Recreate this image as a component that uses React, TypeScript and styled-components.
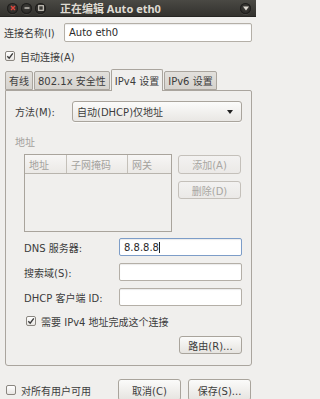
import React from 'react'
import styled, { createGlobalStyle } from 'styled-components'

const GlobalStyle = createGlobalStyle`
  html, body {
    margin: 0;
    padding: 0;
    background: #f0efed;
  }
  body {
    font-family: "DejaVu Sans", "Noto Sans CJK SC", sans-serif;
    font-size: 10px;
    color: #3c3c3c;
  }
`

const Window = styled.div`
  width: 256px;
  height: 399px;
  overflow: hidden;
  background: #f0efed;
  display: flex;
  flex-direction: column;
`

// title bar
const TitleBar = styled.div`
  height: 17px;
  flex: none;
  display: flex;
  align-items: center;
  padding: 0 5px 0 7px;
  background: linear-gradient(#4a4944, #33322e);
  border-bottom: 1px solid #262522;
  box-sizing: border-box;
`

const WinButtons = styled.div`
  display: flex;
  gap: 3px;
`

const WinButton = styled.div`
  width: 11px;
  height: 11px;
  border-radius: 50%;
  background: radial-gradient(circle at 50% 40%, #3e3d39, #252422);
  box-shadow: inset 0 0 0 1px #1f1e1c, 0 1px 0 rgba(255, 255, 255, 0.08);
  display: flex;
  align-items: center;
  justify-content: center;
`

const Title = styled.div`
  flex: 1;
  margin-left: 14px;
  font-family: "Noto Sans", "Noto Sans CJK SC", sans-serif;
  font-weight: 700;
  font-size: 11px;
  color: #dfdbd2;
  white-space: nowrap;
`

const Body = styled.div`
  flex: 1;
  display: flex;
  flex-direction: column;
  padding: 0 4px 0 5px;
`

const NameRow = styled.div`
  margin-top: 6px;
  height: 19px;
  display: flex;
  align-items: center;
`

const NameLabel = styled.span`
  width: 60px;
  margin-left: -1px;
`

const TextInput = styled.div<{ $focused?: boolean; $width?: number }>`
  box-sizing: border-box;
  height: 100%;
  ${(p) => (p.$width ? `width: ${p.$width}px;` : 'flex: 1;')}
  background: #fff;
  border: 1px solid ${(p) => (p.$focused ? '#7d9dc8' : '#b4afa7')};
  border-radius: 2px;
  box-shadow: inset 0 1px 1px rgba(0, 0, 0, 0.08);
  padding-left: 4px;
  display: flex;
  align-items: center;
  font-size: 10px;
  color: #2a2a2a;
`

const Caret = styled.span`
  display: inline-block;
  width: 1px;
  height: 11px;
  background: #222;
`

const CheckRow = styled.label<{ $indent?: number }>`
  display: flex;
  align-items: center;
  height: 12px;
  gap: 5px;
  padding-left: ${(p) => p.$indent ?? 0}px;
`

const Box = styled.span`
  box-sizing: border-box;
  width: 10px;
  height: 10px;
  border: 1px solid #8a8680;
  border-radius: 2px;
  background: linear-gradient(#ffffff, #e8e6e3);
  display: flex;
  align-items: center;
  justify-content: center;
`

const Check = ({ checked }: { checked?: boolean }) => (
  <Box>
    {checked && (
      <svg width="8" height="8" viewBox="0 0 8 8">
        <path d="M1.3 4.2 L3.2 6.2 L6.8 1.4" fill="none" stroke="#3a3a3a" strokeWidth="1.4" />
      </svg>
    )}
  </Box>
)

// tabs
const TabBar = styled.div`
  margin-top: 8px;
  height: 20px;
  display: flex;
  align-items: flex-end;
  position: relative;
  z-index: 1;
`

const Tab = styled.div<{ $active?: boolean }>`
  box-sizing: border-box;
  height: ${(p) => (p.$active ? 22 : 19)}px;
  margin-bottom: ${(p) => (p.$active ? -1 : 0)}px;
  margin-right: 1px;
  padding: 0 3px;
  display: flex;
  align-items: center;
  border: 1px solid #aaa59e;
  border-bottom: ${(p) => (p.$active ? 'none' : '1px solid #aaa59e')};
  border-radius: 2px 2px 0 0;
  background: ${(p) => (p.$active ? '#f0efed' : 'linear-gradient(#e2e0dc, #d6d3ce)')};
  white-space: nowrap;
`

const Panel = styled.div`
  box-sizing: border-box;
  height: 276px;
  border: 1px solid #aaa59e;
  border-radius: 0 2px 3px 3px;
  padding: 10px 9px 0 9px;
  display: flex;
  flex-direction: column;
`

const MethodRow = styled.div`
  height: 21px;
  display: flex;
  align-items: center;
`

const MethodLabel = styled.span`
  width: 57px;
`

const Combo = styled.div`
  box-sizing: border-box;
  flex: 1;
  height: 100%;
  border: 1px solid #a9a49c;
  border-radius: 3px;
  background: linear-gradient(#fbfbfa, #e9e7e4);
  box-shadow: 0 1px 0 rgba(255, 255, 255, 0.6);
  display: flex;
  align-items: center;
  justify-content: space-between;
  padding: 0 8px 0 4px;
`

const Arrow = styled.span`
  width: 0;
  height: 0;
  border-left: 3px solid transparent;
  border-right: 3px solid transparent;
  border-top: 4px solid #222;
`

const SectionLabel = styled.div`
  margin-top: 15px;
  height: 12px;
  line-height: 12px;
  color: #a3a19d;
`

const AddrSection = styled.div`
  margin-top: 5px;
  padding-left: 9px;
  display: flex;
  gap: 6px;
`

const Table = styled.div`
  box-sizing: border-box;
  width: 148px;
  height: 78px;
  border: 1px solid #a9a49c;
  background: #f0efed;
`

const TableHead = styled.div`
  height: 18px;
  display: flex;
  border-bottom: 1px solid #b8b4ad;
  background: linear-gradient(#f7f6f5, #ebe9e6);
`

const HeadCell = styled.div<{ $width: number; $last?: boolean }>`
  box-sizing: border-box;
  width: ${(p) => p.$width}px;
  padding-left: 4px;
  display: flex;
  align-items: center;
  color: #a3a19d;
  border-right: ${(p) => (p.$last ? 'none' : '1px solid #c4c0b9')};
`

const SideButtons = styled.div`
  display: flex;
  flex-direction: column;
  gap: 7px;
  padding-top: 1px;
`

const Button = styled.div<{ $disabled?: boolean; $width?: number; $height?: number }>`
  box-sizing: border-box;
  width: ${(p) => p.$width ?? 63}px;
  height: ${(p) => p.$height ?? 19}px;
  border: 1px solid ${(p) => (p.$disabled ? '#c4c0ba' : '#a9a49c')};
  border-radius: 3px;
  background: ${(p) =>
    p.$disabled ? 'linear-gradient(#f3f2f1, #ebe9e7)' : 'linear-gradient(#fbfbfa, #e6e4e0)'};
  color: ${(p) => (p.$disabled ? '#a8a6a2' : '#3c3c3c')};
  display: flex;
  align-items: center;
  justify-content: center;
  white-space: nowrap;
`

const FieldGrid = styled.div`
  margin-top: 6px;
  padding-left: 9px;
  margin-right: -1px;
  display: grid;
  grid-template-columns: 95px 123px;
  grid-auto-rows: 18px;
  row-gap: 7px;
  align-items: center;
`

const RouteRow = styled.div`
  margin-top: 9px;
  display: flex;
  justify-content: flex-end;
`

const Footer = styled.div`
  margin-top: 13px;
  height: 22px;
  display: flex;
  align-items: center;
  padding-left: 1px;
  margin-right: 1px;
`

const FooterButtons = styled.div`
  margin-left: auto;
  display: flex;
  gap: 7px;
`

const tabs = ['有线', '802.1x 安全性', 'IPv4 设置', 'IPv6 设置']

export default function App() {
  return (
    <Window>
      <GlobalStyle />
      <TitleBar>
        <WinButtons>
          <WinButton>
            <svg width="6" height="6" viewBox="0 0 6 6">
              <path d="M1 1 L5 5 M5 1 L1 5" stroke="#e2453c" strokeWidth="1.4" />
            </svg>
          </WinButton>
          <WinButton>
            <svg width="6" height="6" viewBox="0 0 6 6">
              <path d="M0.5 3 H5.5" stroke="#c9c5bd" strokeWidth="1.4" />
            </svg>
          </WinButton>
          <WinButton>
            <svg width="6" height="6" viewBox="0 0 6 6">
              <rect x="0.7" y="0.7" width="4.6" height="4.6" fill="none" stroke="#c9c5bd" strokeWidth="1.2" />
            </svg>
          </WinButton>
        </WinButtons>
        <Title>正在编辑 Auto eth0</Title>
        <WinButton>
          <svg width="6" height="5" viewBox="0 0 6 5">
            <path d="M0 0.5 H6 L3 4.5 Z" fill="#dedad2" />
          </svg>
        </WinButton>
      </TitleBar>

      <Body>
        <NameRow>
          <NameLabel>连接名称(I)</NameLabel>
          <TextInput>Auto eth0</TextInput>
        </NameRow>

        <CheckRow style={{ marginTop: 8 }}>
          <Check checked />
          自动连接(A)
        </CheckRow>

        <TabBar>
          {tabs.map((t) => (
            <Tab key={t} $active={t === 'IPv4 设置'}>
              {t}
            </Tab>
          ))}
        </TabBar>

        <Panel>
          <MethodRow>
            <MethodLabel>方法(M):</MethodLabel>
            <Combo>
              自动(DHCP)仅地址
              <Arrow />
            </Combo>
          </MethodRow>

          <SectionLabel>地址</SectionLabel>
          <AddrSection>
            <Table>
              <TableHead>
                <HeadCell $width={42}>地址</HeadCell>
                <HeadCell $width={61}>子网掩码</HeadCell>
                <HeadCell $width={43} $last>
                  网关
                </HeadCell>
              </TableHead>
            </Table>
            <SideButtons>
              <Button $disabled>添加(A)</Button>
              <Button $disabled $height={18}>
                删除(D)
              </Button>
            </SideButtons>
          </AddrSection>

          <FieldGrid>
            <span>DNS 服务器:</span>
            <TextInput $focused>
              8.8.8.8
              <Caret />
            </TextInput>
            <span>搜索域(S):</span>
            <TextInput />
            <span>DHCP 客户端 ID:</span>
            <TextInput />
          </FieldGrid>

          <CheckRow $indent={11} style={{ marginTop: 9 }}>
            <Check checked />
            需要 IPv4 地址完成这个连接
          </CheckRow>

          <RouteRow>
            <Button $height={18}>路由(R)...</Button>
          </RouteRow>
        </Panel>

        <Footer>
          <CheckRow>
            <Check />
            对所有用户可用
          </CheckRow>
          <FooterButtons>
            <Button $height={22}>取消(C)</Button>
            <Button $height={22}>保存(S)...</Button>
          </FooterButtons>
        </Footer>
      </Body>
    </Window>
  )
}
